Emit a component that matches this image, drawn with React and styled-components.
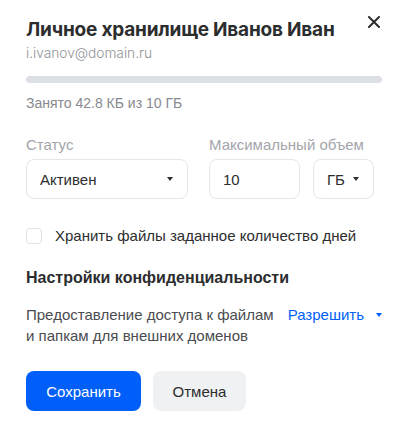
import React from "react";
import styled, { createGlobalStyle } from "styled-components";

const GlobalStyle = createGlobalStyle`
  body {
    margin: 0;
    background: #fff;
    font-family: "Liberation Sans", Arial, sans-serif;
    color: #2c2d2e;
  }
`;

const Dialog = styled.div`
  position: relative;
  width: 408px;
  height: 426px;
  box-sizing: border-box;
  padding: 18px 26px 0 26px;
`;

const CloseButton = styled.button`
  position: absolute;
  top: 12px;
  right: 24px;
  width: 20px;
  height: 20px;
  padding: 0;
  border: none;
  background: none;
  display: flex;
  align-items: center;
  justify-content: center;
  cursor: pointer;
`;

const Title = styled.h2`
  margin: 0;
  font-family: Inter, "Open Sans", sans-serif;
  font-weight: 700;
  font-size: 19px;
  line-height: 24px;
  letter-spacing: -0.2px;
  color: #2c2d2e;
`;

const Email = styled.div`
  margin-top: 3px;
  font-family: Inter, sans-serif;
  font-weight: 300;
  font-size: 13.7px;
  line-height: 16px;
  color: #919399;
`;

const Progress = styled.div`
  margin-top: 15px;
  height: 7px;
  border-radius: 4px;
  background: #dcdfe5;
`;

const Usage = styled.div`
  margin-top: 11px;
  font-size: 14px;
  line-height: 18px;
  color: #87898f;
`;

const FieldsRow = styled.div`
  display: flex;
  gap: 21px;
  margin-top: 24px;
`;

const Field = styled.div`
  display: flex;
  flex-direction: column;
  gap: 5px;
  width: ${(p) => p.width}px;
`;

const Label = styled.div`
  font-size: 15px;
  line-height: 18px;
  color: #a3a5ab;
`;

const Controls = styled.div`
  display: flex;
  gap: 13px;
`;

const Box = styled.div`
  box-sizing: border-box;
  height: 40px;
  width: ${(p) => p.width}px;
  border: 1px solid #e5e6ea;
  border-radius: 8px;
  padding: 0 14px 0 13px;
  display: flex;
  align-items: center;
  justify-content: space-between;
  font-size: 15px;
  color: #2c2d2e;
`;

const Caret = styled.span`
  width: 0;
  height: 0;
  border-left: 3.5px solid transparent;
  border-right: 3.5px solid transparent;
  border-top: 4px solid ${(p) => p.color || "#2c2d2e"};
`;

const CheckRow = styled.label`
  display: flex;
  align-items: center;
  gap: 13px;
  margin-top: 28px;
  font-size: 15px;
  line-height: 18px;
  color: #2c2d2e;
`;

const CheckBox = styled.span`
  box-sizing: border-box;
  width: 16px;
  height: 16px;
  border: 1px solid #e0e1e6;
  border-radius: 4px;
`;

const SectionTitle = styled.h3`
  margin: 23px 0 0;
  font-size: 16px;
  line-height: 20px;
  font-weight: 700;
  color: #2c2d2e;
`;

const PrivacyRow = styled.div`
  display: flex;
  justify-content: space-between;
  align-items: flex-start;
  margin-top: 16px;
`;

const PrivacyText = styled.div`
  font-size: 15px;
  line-height: 21px;
  color: #4a4c50;
`;

const LinkSelect = styled.div`
  display: flex;
  align-items: center;
  gap: 12px;
  font-size: 15px;
  line-height: 21px;
  color: #005ff9;
`;

const Buttons = styled.div`
  display: flex;
  gap: 12px;
  margin-top: 25px;
`;

const Button = styled.button`
  height: 40px;
  width: ${(p) => p.width}px;
  border: none;
  border-radius: 8px;
  font-family: "Liberation Sans", Arial, sans-serif;
  font-size: 15px;
  cursor: pointer;
  background: ${(p) => (p.primary ? "#005ff9" : "#f0f1f3")};
  color: ${(p) => (p.primary ? "#fff" : "#2c2d2e")};
`;

export default function App() {
  return (
    <>
      <GlobalStyle />
      <Dialog>
        <CloseButton aria-label="Закрыть">
          <svg width="12" height="12" viewBox="0 0 12 12">
            <path d="M1 1 L11 11 M11 1 L1 11" stroke="#2c2d2e" strokeWidth="2" strokeLinecap="round" />
          </svg>
        </CloseButton>
        <Title>Личное хранилище Иванов Иван</Title>
        <Email>i.ivanov@domain.ru</Email>
        <Progress />
        <Usage>Занято 42.8 КБ из 10 ГБ</Usage>

        <FieldsRow>
          <Field width={162}>
            <Label>Статус</Label>
            <Box width={162}>
              Активен
              <Caret />
            </Box>
          </Field>
          <Field>
            <Label>Максимальный объем</Label>
            <Controls>
              <Box width={91}>10</Box>
              <Box width={61}>
                ГБ
                <Caret />
              </Box>
            </Controls>
          </Field>
        </FieldsRow>

        <CheckRow>
          <CheckBox />
          Хранить файлы заданное количество дней
        </CheckRow>

        <SectionTitle>Настройки конфиденциальности</SectionTitle>
        <PrivacyRow>
          <PrivacyText>
            Предоставление доступа к файлам
            <br />
            и папкам для внешних доменов
          </PrivacyText>
          <LinkSelect>
            Разрешить
            <Caret color="#005ff9" />
          </LinkSelect>
        </PrivacyRow>

        <Buttons>
          <Button primary width={115}>Сохранить</Button>
          <Button width={93}>Отмена</Button>
        </Buttons>
      </Dialog>
    </>
  );
}
